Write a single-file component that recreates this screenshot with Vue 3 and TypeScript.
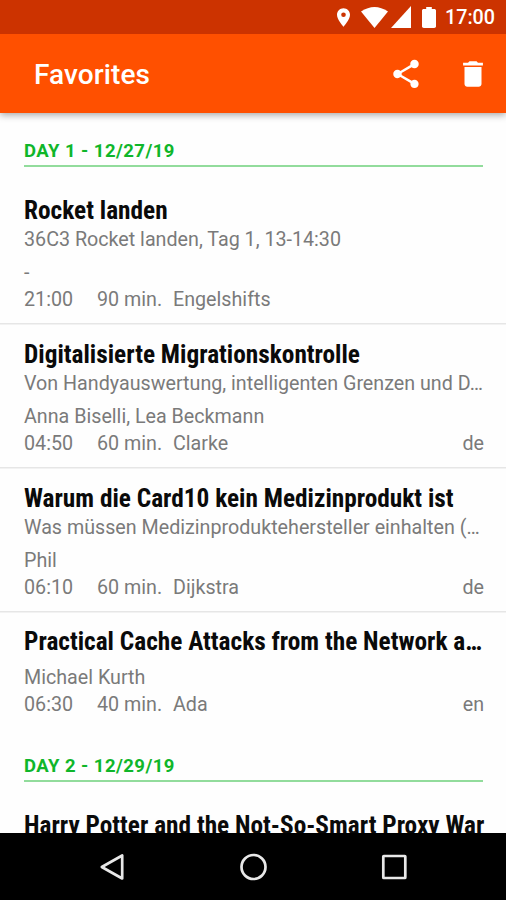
<script setup lang="ts">
interface Session {
  title: string
  subtitle?: string
  speakers?: string
  time?: string
  duration?: string
  room?: string
  lang?: string
}

interface Day {
  label: string
  sessions: Session[]
}

const days: Day[] = [
  {
    label: 'DAY 1 - 12/27/19',
    sessions: [
      {
        title: 'Rocket landen',
        subtitle: '36C3 Rocket landen, Tag 1, 13-14:30',
        speakers: '-',
        time: '21:00',
        duration: '90 min.',
        room: 'Engelshifts',
      },
      {
        title: 'Digitalisierte Migrationskontrolle',
        subtitle: 'Von Handyauswertung, intelligenten Grenzen und D…',
        speakers: 'Anna Biselli, Lea Beckmann',
        time: '04:50',
        duration: '60 min.',
        room: 'Clarke',
        lang: 'de',
      },
      {
        title: 'Warum die Card10 kein Medizinprodukt ist',
        subtitle: 'Was müssen Medizinproduktehersteller einhalten (…',
        speakers: 'Phil',
        time: '06:10',
        duration: '60 min.',
        room: 'Dijkstra',
        lang: 'de',
      },
      {
        title: 'Practical Cache Attacks from the Network a…',
        speakers: 'Michael Kurth',
        time: '06:30',
        duration: '40 min.',
        room: 'Ada',
        lang: 'en',
      },
    ],
  },
  {
    label: 'DAY 2 - 12/29/19',
    sessions: [{ title: 'Harry Potter and the Not-So-Smart Proxy War' }],
  },
]
</script>

<template>
  <div class="screen">
    <header class="status">
      <svg class="pin" viewBox="5 2 14 20"><path d="M12 2C8.13 2 5 5.13 5 9c0 5.25 7 13 7 13s7-7.75 7-13c0-3.87-3.13-7-7-7zm0 9.5a2.5 2.5 0 0 1 0-5 2.5 2.5 0 0 1 0 5z" /></svg>
      <svg class="wifi" viewBox="0 0 27 21"><path d="M13.500 21L0 4.500Q13.500-4.500 27 4.500z" /></svg>
      <svg class="signal" viewBox="0 0 20 22"><path d="M20 0v22H0z" /></svg>
      <svg class="battery" viewBox="7 2 10 20" preserveAspectRatio="none"><path d="M15.670 4H14V2h-4v2H8.330C7.600 4 7 4.600 7 5.330v15.330C7 21.400 7.600 22 8.330 22h7.330c.740 0 1.340-.600 1.340-1.330V5.330C17 4.600 16.400 4 15.670 4z" /></svg>
      <span class="clock">17:00</span>
    </header>

    <div class="toolbar">
      <h1>Favorites</h1>
      <button class="action share" aria-label="Share">
        <svg viewBox="0 0 24 24"><path d="M18 16.080c-.760 0-1.440.300-1.960.770L8.910 12.700c.050-.230.090-.460.090-.700s-.040-.470-.090-.700l7.050-4.110c.540.500 1.250.810 2.040.810 1.660 0 3-1.340 3-3s-1.340-3-3-3-3 1.340-3 3c0 .240.040.470.090.700L8.040 9.810C7.500 9.310 6.790 9 6 9c-1.660 0-3 1.340-3 3s1.340 3 3 3c.790 0 1.500-.310 2.040-.810l7.120 4.160c-.050.210-.080.430-.080.650 0 1.610 1.310 2.920 2.920 2.920s2.920-1.310 2.920-2.920-1.310-2.920-2.920-2.920z" /></svg>
      </button>
      <button class="action" aria-label="Delete">
        <svg viewBox="0 0 24 24"><path d="M6 19c0 1.100.900 2 2 2h8c1.100 0 2-.900 2-2V7H6v12zM19 4h-3.500l-1-1h-5l-1 1H5v2h14V4z" /></svg>
      </button>
    </div>

    <main class="list">
      <section v-for="day in days" :key="day.label">
        <div class="day"><h2>{{ day.label }}</h2></div>
        <article v-for="s in day.sessions" :key="s.title" class="session" :class="{ compact: !s.subtitle && s.time }">
          <h3>{{ s.title }}</h3>
          <p v-if="s.subtitle" class="line">{{ s.subtitle }}</p>
          <p v-if="s.speakers" class="line speakers">{{ s.speakers }}</p>
          <p v-if="s.time" class="line meta">
            <span>{{ s.time }}</span>
            <span>{{ s.duration }}</span>
            <span>{{ s.room }}</span>
            <span>{{ s.lang }}</span>
          </p>
        </article>
      </section>
    </main>

    <nav class="navbar">
      <svg viewBox="0 0 30 30"><path d="M25.200 3.500v23L4.800 15z" /></svg>
      <svg viewBox="0 0 30 30"><circle cx="15.500" cy="15" r="12" /></svg>
      <svg viewBox="0 0 30 30"><rect x="4.300" y="4" width="22" height="22" rx="0.500" /></svg>
    </nav>
  </div>
</template>

<style>
body {
  margin: 0;
  background: #fff;
}
</style>

<style scoped>
.screen {
  display: flex;
  flex-direction: column;
  height: 900px;
  overflow: hidden;
  background: #fefefe;
  font-family: Roboto, sans-serif;
}

h1,
h2,
h3,
p {
  margin: 0;
}

.status {
  display: flex;
  flex: none;
  align-items: center;
  box-sizing: border-box;
  justify-content: flex-end;
  height: 34px;
  padding-right: 11px;
  background: #cc3300;
  color: #fff;
  z-index: 2;
}

.status svg {
  fill: #fff;
}

.pin {
  width: 13px;
  height: 19px;
  margin-right: 11px;
}

.wifi {
  width: 27px;
  height: 21px;
  margin-right: 3px;
}

.signal {
  width: 20px;
  height: 22px;
  margin-right: 11px;
}

.battery {
  width: 14px;
  height: 21px;
  margin-right: 9px;
}

.clock {
  padding-top: 2px;
  font-size: 19.7px;
  font-weight: 500;
  line-height: 34px;
}

.toolbar {
  display: flex;
  flex: none;
  align-items: center;
  box-sizing: border-box;
  height: 79px;
  padding: 0 16px 0 34px;
  background: #ff5000;
  box-shadow: 0 2px 7px rgba(0, 0, 0, 0.35);
  z-index: 1;
}

h1 {
  flex: 1;
  padding-top: 2px;
  color: #fff;
  font-size: 28px;
  font-weight: 500;
  letter-spacing: 0.1px;
  line-height: 40px;
}

.action {
  width: 34px;
  height: 34px;
  padding: 0;
  border: 0;
  background: none;
}

.share {
  margin-right: 33px;
}

.action svg {
  display: block;
  width: 34px;
  height: 34px;
  fill: #fff;
}

.list {
  flex: 1;
  min-height: 0;
  overflow: hidden;
}

.day {
  box-sizing: border-box;
  height: 66px;
  padding: 25px 23px 0 24px;
}

h2 {
  height: 26.500px;
  border-bottom: 2px solid #92dc9c;
  color: #0fb62a;
  font-size: 18.500px;
  font-weight: 700;
  letter-spacing: 0.450px;
  line-height: 26px;
  white-space: nowrap;
}

.session {
  padding: 16px 22px 10px 24px;
  color: #7a7a7a;
}

.session + .session {
  box-shadow: inset 0 1.500px 0 #e6e6e6;
}

.session.compact {
  padding-top: 15px;
}

.compact h3 {
  margin-bottom: 7px;
}

h3 {
  height: 31px;
  color: #0a0a0a;
  font-family: 'Roboto Condensed', Roboto, sans-serif;
  font-size: 25.300px;
  font-stretch: 75%;
  font-weight: 700;
  line-height: 31px;
  white-space: nowrap;
}

.line {
  height: 27px;
  font-size: 19.700px;
  line-height: 27px;
  white-space: nowrap;
}

.speakers {
  margin-top: 6px;
}

.compact .speakers {
  margin-top: 0;
}

.meta {
  display: grid;
  grid-template-columns: 73px 76px 1fr auto;
}

.navbar {
  display: flex;
  flex: none;
  align-items: center;
  justify-content: center;
  gap: 111px;
  height: 67px;
  background: #000;
}

.navbar svg {
  width: 30px;
  height: 30px;
  fill: none;
  stroke: #e8e8e8;
  stroke-width: 2.700;
  stroke-linejoin: round;
}
</style>
